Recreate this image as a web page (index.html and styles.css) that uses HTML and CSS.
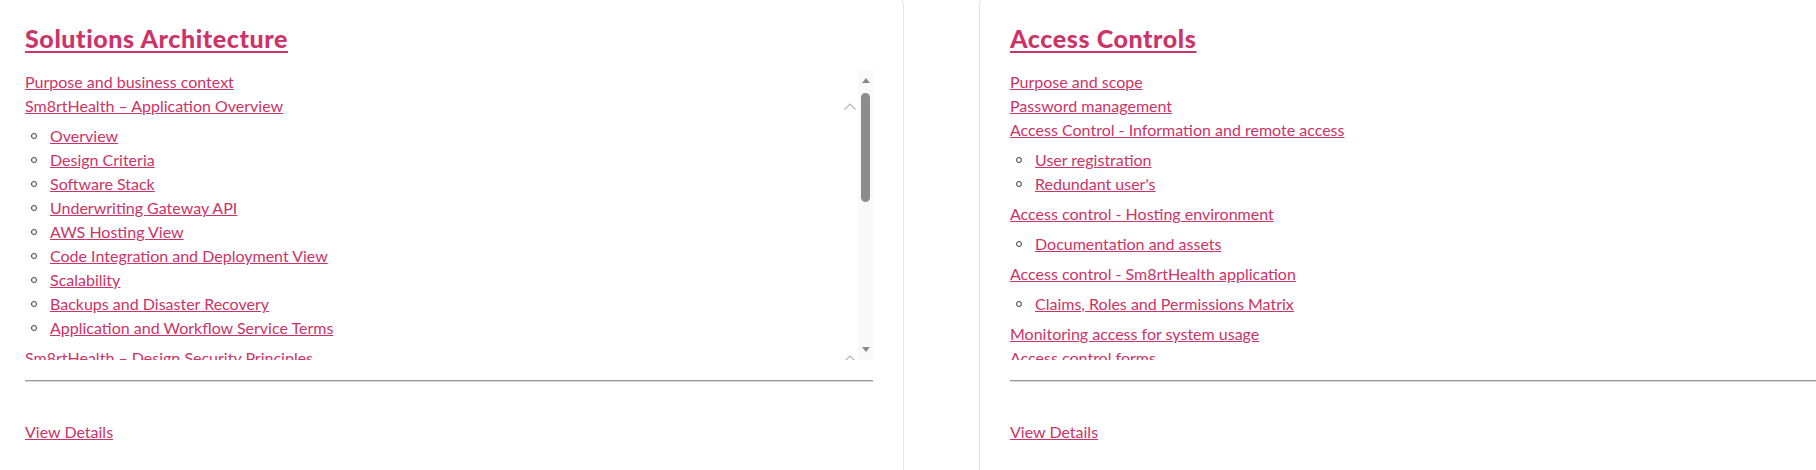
FILE: index.html
```html
<!DOCTYPE html>
<html lang="en">
<head>
<meta charset="utf-8">
<title>Documents</title>
<link rel="stylesheet" href="styles.css">
</head>
<body>
<div class="page">
  <section class="card">
    <h2 class="card-title"><a href="#">Solutions Architecture</a></h2>
    <div class="toc-box">
      <div class="toc">
        <ul class="toc-list">
          <li><div class="row"><a href="#">Purpose and business context</a></div></li>
          <li>
            <div class="row"><a href="#">Sm8rtHealth – Application Overview</a><svg class="chev" width="12" height="7" viewBox="0 0 12 7"><path d="M0.5 6.5 L6 1 L11.5 6.5" fill="none" stroke="#a9b5c6" stroke-width="1.2"/></svg></div>
            <ul class="sub">
              <li><a href="#">Overview</a></li>
              <li><a href="#">Design Criteria</a></li>
              <li><a href="#">Software Stack</a></li>
              <li><a href="#">Underwriting Gateway API</a></li>
              <li><a href="#">AWS Hosting View</a></li>
              <li><a href="#">Code Integration and Deployment View</a></li>
              <li><a href="#">Scalability</a></li>
              <li><a href="#">Backups and Disaster Recovery</a></li>
              <li><a href="#">Application and Workflow Service Terms</a></li>
            </ul>
          </li>
          <li>
            <div class="row"><a href="#">Sm8rtHealth – Design Security Principles</a><svg class="chev" width="12" height="7" viewBox="0 0 12 7"><path d="M0.5 6.5 L6 1 L11.5 6.5" fill="none" stroke="#a9b5c6" stroke-width="1.2"/></svg></div>
            <ul class="sub">
              <li><a href="#">Authentication</a></li>
              <li><a href="#">Encryption</a></li>
            </ul>
          </li>
        </ul>
      </div>
      <div class="scrollbar">
        <span class="arrow up"></span>
        <div class="track"><span class="thumb"></span></div>
        <span class="arrow down"></span>
      </div>
    </div>
    <hr class="divider">
    <a class="details" href="#">View Details</a>
  </section>

  <section class="card">
    <h2 class="card-title"><a href="#">Access Controls</a></h2>
    <div class="toc-box">
      <div class="toc">
        <ul class="toc-list">
          <li><div class="row"><a href="#">Purpose and scope</a></div></li>
          <li><div class="row"><a href="#">Password management</a></div></li>
          <li>
            <div class="row"><a href="#">Access Control - Information and remote access</a><svg class="chev" width="12" height="7" viewBox="0 0 12 7"><path d="M0.5 6.5 L6 1 L11.5 6.5" fill="none" stroke="#a9b5c6" stroke-width="1.2"/></svg></div>
            <ul class="sub">
              <li><a href="#">User registration</a></li>
              <li><a href="#">Redundant user's</a></li>
            </ul>
          </li>
          <li>
            <div class="row"><a href="#">Access control - Hosting environment</a><svg class="chev" width="12" height="7" viewBox="0 0 12 7"><path d="M0.5 6.5 L6 1 L11.5 6.5" fill="none" stroke="#a9b5c6" stroke-width="1.2"/></svg></div>
            <ul class="sub">
              <li><a href="#">Documentation and assets</a></li>
            </ul>
          </li>
          <li>
            <div class="row"><a href="#">Access control - Sm8rtHealth application</a><svg class="chev" width="12" height="7" viewBox="0 0 12 7"><path d="M0.5 6.5 L6 1 L11.5 6.5" fill="none" stroke="#a9b5c6" stroke-width="1.2"/></svg></div>
            <ul class="sub">
              <li><a href="#">Claims, Roles and Permissions Matrix</a></li>
            </ul>
          </li>
          <li><div class="row"><a href="#">Monitoring access for system usage</a></div></li>
          <li><div class="row"><a href="#">Access control forms</a></div></li>
        </ul>
      </div>
      <div class="scrollbar">
        <span class="arrow up"></span>
        <div class="track"><span class="thumb"></span></div>
        <span class="arrow down"></span>
      </div>
    </div>
    <hr class="divider">
    <a class="details" href="#">View Details</a>
  </section>
</div>
</body>
</html>
```
FILE: styles.css
```css
html, body {
  margin: 0;
  padding: 0;
  background: #ffffff;
  overflow: hidden;
}

body {
  font-family: Lato, "Liberation Sans", sans-serif;
  font-size: 16px;
  line-height: 24px;
  color: #333;
}

a {
  color: #cc3366;
  text-decoration: underline;
}

.page {
  display: flex;
  gap: 75px;
  margin: -7px 0 0 -6px;
  width: 1895px;
}

.card {
  flex: 0 0 910px;
  box-sizing: border-box;
  border: 1px solid #e4e4e7;
  border-radius: 12px;
  padding: 28px 30px 40px;
  background: #fff;
  height: 520px;
}

.card-title {
  margin: 0;
  font-size: 25px;
  line-height: 32px;
  font-weight: 900;
  letter-spacing: 0.6px;
}

.card-title a {
  text-decoration-thickness: 2px;
  text-underline-offset: 3px;
}

.toc-box {
  display: flex;
  height: 290px;
  margin-top: 16px;
}

.toc {
  flex: 1;
  overflow: hidden;
}

.toc-list, .sub {
  list-style: none;
  margin: 0;
  padding: 0;
}

.row {
  display: flex;
  align-items: center;
  height: 24px;
}

.chev {
  margin-left: auto;
  margin-right: 2px;
  flex: 0 0 auto;
}

.sub {
  margin: 6px 0;
}

.sub li {
  display: flex;
  align-items: center;
  height: 24px;
}

.sub li::before {
  content: "";
  width: 4px;
  height: 4px;
  border: 1.3px solid #3c3c3c;
  border-radius: 50%;
  margin: 0 13px 0 6px;
  flex: 0 0 auto;
}

.scrollbar {
  flex: 0 0 15px;
  display: flex;
  flex-direction: column;
  align-items: center;
  background: #f9f9f9;
}

.arrow {
  width: 0;
  height: 0;
  border-left: 4px solid transparent;
  border-right: 4px solid transparent;
  flex: 0 0 auto;
}

.arrow.up {
  border-bottom: 5px solid #8a8a8a;
  margin-top: 8px;
}

.arrow.down {
  border-top: 5px solid #8a8a8a;
  margin-bottom: 8px;
}

.track {
  flex: 1;
  width: 100%;
  display: flex;
  justify-content: center;
  padding-top: 10px;
}

.thumb {
  width: 9px;
  height: 109px;
  border-radius: 5px;
  background: #8c8c8c;
}

.divider {
  margin: 20px 0 0;
  border: 0;
  border-top: 1px solid #9a9a9a;
  border-bottom: 1px solid #d8d8d8;
  height: 0;
}

.details {
  display: inline-block;
  margin-top: 38px;
}
```
